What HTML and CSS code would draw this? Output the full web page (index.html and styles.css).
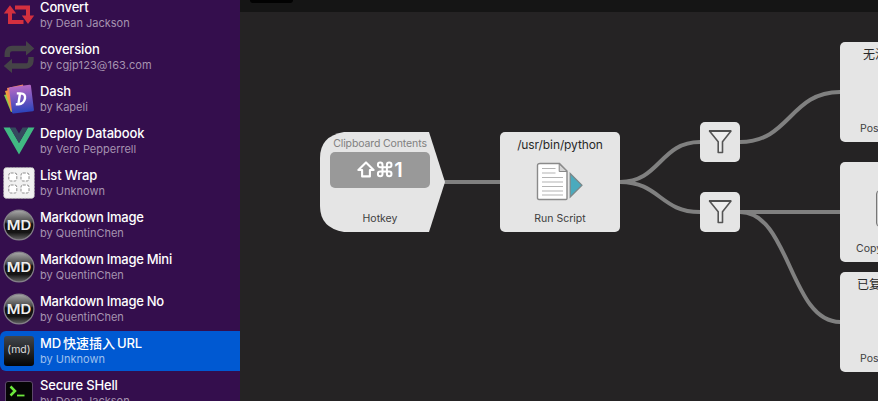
FILE: index.html
```html
<!DOCTYPE html>
<html lang="en">
<head>
<meta charset="utf-8">
<title>Workflows</title>
<link rel="stylesheet" href="styles.css">
</head>
<body>
<svg class="defs" width="0" height="0" aria-hidden="true">
  <defs>
    <linearGradient id="ball" x2="0" y2="1"><stop offset="0" stop-color="#aaa"/><stop offset=".4" stop-color="#484848"/><stop offset=".46" stop-color="#101010"/><stop offset=".75" stop-color="#151515"/><stop offset="1" stop-color="#666"/></linearGradient>
    <linearGradient id="dash" x2="0" y2="1"><stop offset="0" stop-color="#b568c4"/><stop offset="1" stop-color="#2c44bb"/></linearGradient>
    <symbol id="md" viewBox="0 0 32 32"><circle cx="16" cy="16" r="14.9" fill="url(#ball)" stroke="#858189" stroke-width="1.2"/><text x="16" y="21" text-anchor="middle" textLength="24.5" lengthAdjust="spacingAndGlyphs" class="md-text">MD</text></symbol>
    <symbol id="funnel" viewBox="0 0 40 40"><path d="M9.5 9H31L22.5 19.8V30.5H18.2V19.8Z" fill="#ededed" stroke="#555" stroke-width="1.6" stroke-linejoin="round"/><path d="M9 9H31" stroke="#4b4b4b" stroke-width="1.8"/></symbol>
  </defs>
</svg>
<div class="app">
  <aside class="sidebar">
    <div class="row"><svg class="icon" viewBox="0 0 32 32"><path d="M7 12V23H20.5M12 8.5H25V17" fill="none" stroke="#d3303f" stroke-width="4"/><path d="M.8 14.6 7 6.2 13.2 14.6ZM18.8 16.5H31.2L25 25Z" fill="#d3303f"/></svg><div><div class="title">Convert</div><div class="by">by Dean Jackson</div></div></div>
    <div class="row"><svg class="icon" viewBox="0 0 32 32"><path d="M4.2 16C4 9.5 5.5 7.5 9.5 7.5H25M28 16C28.3 23 26.5 25 22.5 25H8" fill="none" stroke="#454347" stroke-width="5.4"/><path d="M23 0 31.3 7.5 23 14.5ZM9 17.8 .8 25 9 32Z" fill="#454347"/></svg><div><div class="title">coversion</div><div class="by mail">by cgjp123@163.com</div></div></div>
    <div class="row"><svg class="icon" viewBox="0 0 32 32"><path d="M1 12 15 8 21 26 8 29Z" fill="#8ad04c"/><path d="M2 8 17 4 22 25 8 28Z" fill="#f09a3c"/><path d="M4 5 20 1.5 22 26 8 28Z" fill="#ee855c"/><rect x="7.5" y="3" width="22" height="26.5" rx="1.2" transform="rotate(-7 18 16)" fill="url(#dash)"/><path d="M13.8 10.4H17.5C21 10.4 22.6 12.5 22 15.6S18.8 21.2 15.8 21.2H12.8M17 10.4 15.4 21" fill="none" stroke="#fff" stroke-width="2.4"/></svg><div><div class="title">Dash</div><div class="by">by Kapeli</div></div></div>
    <div class="row"><svg class="icon" viewBox="0 0 32 32"><path d="M.5 2.5H7L16 18 25 2.5H31.5L16 29.5Z" fill="#41b883"/><path d="M7 2.5H12.5L16 8.5 19.5 2.5H25L16 18Z" fill="#35495e"/></svg><div><div class="title">Deploy Databook</div><div class="by">by Vero Pepperrell</div></div></div>
    <div class="row"><svg class="icon" viewBox="0 0 32 32"><rect x=".6" y=".6" width="30.8" height="30.8" rx="3" fill="#f1f1f1" stroke="#aaa" stroke-width=".8" stroke-dasharray="2 1.2"/><g fill="#fff" stroke="#8e8e8e" stroke-dasharray="2.8 1.2"><rect x="5.8" y="6" width="8" height="8" rx="2"/><rect x="18" y="6" width="8" height="8" rx="2"/><rect x="5.8" y="18" width="8" height="8" rx="2"/><rect x="18" y="18" width="8" height="8" rx="2"/></g></svg><div><div class="title">List Wrap</div><div class="by">by Unknown</div></div></div>
    <div class="row"><svg class="icon"><use href="#md"/></svg><div><div class="title tight">Markdown Image</div><div class="by">by QuentinChen</div></div></div>
    <div class="row"><svg class="icon"><use href="#md"/></svg><div><div class="title tight">Markdown Image Mini</div><div class="by">by QuentinChen</div></div></div>
    <div class="row"><svg class="icon"><use href="#md"/></svg><div><div class="title tight">Markdown Image No</div><div class="by">by QuentinChen</div></div></div>
    <div class="row selected"><div class="icon"><div class="md-tile">(md)</div></div><div><div class="title">MD<span class="cjk">快速插入</span>URL</div><div class="by">by Unknown</div></div></div>
    <div class="row"><svg class="icon" viewBox="0 0 32 32"><rect x="2.5" y="4.5" width="27" height="27" rx="2.5" fill="#050505" stroke="#5d486b"/><path d="M7.5 9.5 12 14 7.5 18.5" fill="none" stroke="#6de83c" stroke-width="2.5"/><path d="M14 18.5H21.5" stroke="#6de83c" stroke-width="1.8"/></svg><div><div class="title">Secure SHell</div><div class="by">by Dean Jackson</div></div></div>
  </aside>
  <main class="main">
    <div class="topbar"><div class="tab"></div></div>
    <div class="canvas">
      <svg class="wires" viewBox="240 12 638 389"><path d="M444 182H500M620 182C660 182 660 142 700 142M620 182C660 182 660 212 700 212M740 142C790 142 790 92 840 92M740 212H840M740 212C790 212 790 322 840 322"/></svg>
      <section class="node hotkey">
        <svg class="shape" viewBox="0 0 125 100"><path d="M24 0H109L125 50 109 100H24Q0 96 0 74V26Q0 4 24 0Z" fill="#e5e5e5"/></svg>
        <div class="hint">Clipboard Contents</div>
        <div class="keys"><svg viewBox="0 0 37 20"><g fill="none" stroke="#fff" stroke-width="2.1" stroke-linejoin="round"><path d="M9 2.4 1.4 10H5.1V16.4H12.9V10H16.6Z"/><path d="M25.5 6.9V4.9A2.3 2.3 0 1 0 23.2 7.2H32.2A2.3 2.3 0 1 0 29.9 4.9V13.9A2.3 2.3 0 1 0 32.2 11.6H23.2A2.3 2.3 0 1 0 25.5 13.9Z" stroke-width="2"/></g></svg><span>1</span></div>
        <div class="kind">Hotkey</div>
      </section>
      <section class="node script">
        <div class="head">/usr/bin/python</div>
        <svg class="doc" viewBox="0 0 48 40"><path d="M4 1.5H23.5L31 9V36.5Q31 37.5 30 37.5H3Q1.5 37.5 1.5 36V3.5Q1.5 1.5 4 1.5Z" fill="#fff" stroke="#8a8a8a" stroke-width="1.4"/><path d="M23.2 2V9.5H31Z" fill="#d5d5d5" stroke="#888"/><path d="M6 6.5H19.5M6 11H19.5M6 15.5H27M6 20H27M6 24.5H27M6 29H27M6 33H27" stroke="#b4b4b4" stroke-width="1.2"/><path d="M34.2 11.5V35L46 23.2Z" fill="#4baabd" stroke="#7b8789" stroke-width="1.2"/></svg>
        <div class="kind">Run Script</div>
      </section>
      <section class="node filter upper"><svg><use href="#funnel"/></svg></section>
      <section class="node filter lower"><svg><use href="#funnel"/></svg></section>
      <section class="node out one"><div class="head">无法</div><div class="kind">Post Notification</div></section>
      <section class="node out two"><div class="clip"></div><div class="kind">Copy to Clipboard</div></section>
      <section class="node out three"><div class="head">已复制</div><div class="kind">Post Notification</div></section>
    </div>
  </main>
</div>
</body>
</html>
```
FILE: styles.css
```css
* { box-sizing: border-box; }
body { margin: 0; font-family: Inter, "Noto Sans CJK SC", sans-serif; overflow: hidden; }
.defs { position: absolute; }
.app { display: flex; width: 878px; height: 401px; overflow: hidden; background: #252324; }
.sidebar { display: flex; flex-direction: column; gap: 2px; width: 240px; flex: none; margin-top: -5px; background: #340e4d; }
.row { display: flex; flex: none; height: 40px; padding: 4px 0 0 3px; gap: 5px; white-space: nowrap; }
.row.selected { background: #0059d2; border-radius: 6px 0 0 6px; }
.icon { width: 32px; height: 32px; flex: none; }
.title { height: 16px; line-height: 16px; font-size: 13px; font-weight: 500; letter-spacing: -.15px; color: #fff; }
.title.tight { letter-spacing: -.27px; }
.by { height: 16px; line-height: 16px; font-size: 11px; color: #a693b0; }
.by.mail { letter-spacing: .1px; }
.selected .by { color: #9dc0ee; }
.cjk { margin: 0 2px; letter-spacing: 0; }
.md-text { font: 600 13.5px Inter, sans-serif; fill: #eee; }
.md-tile { width: 30px; height: 30px; margin: 1px; border-radius: 3px; background: linear-gradient(#42464c, #050505); color: #ddd; font-size: 10.5px; line-height: 28px; text-align: center; }
.main { flex: 1; display: flex; flex-direction: column; min-width: 0; }
.topbar { height: 12px; flex: none; background: #151515; padding-left: 10px; }
.tab { width: 43px; height: 3px; background: #020202; border-radius: 0 0 4px 4px; }
.canvas { position: relative; flex: 1; overflow: hidden; }
.wires { position: absolute; left: 0; top: 0; width: 638px; height: 389px; fill: none; stroke: #808080; stroke-width: 4; }
.node { position: absolute; display: flex; flex-direction: column; align-items: center; width: 120px; height: 100px; background: #e5e5e5; border-radius: 5px; white-space: nowrap; color: #282828; }
.kind { margin-top: auto; margin-bottom: 5px; font-size: 10.5px; line-height: 16px; color: #404040; }
.head { margin-top: 5px; font-size: 12px; line-height: 16px; letter-spacing: -.1px; }
.hotkey { left: 80px; top: 120px; background: none; }
.shape { position: absolute; width: 125px; height: 100px; left: 0; top: 0; }
.hint { position: relative; margin-top: 4px; height: 16px; font-size: 10.5px; line-height: 16px; letter-spacing: -.12px; color: #808080; }
.keys { position: relative; display: flex; align-items: center; justify-content: center; width: 100px; height: 36px; border-radius: 5px; background: #999; color: #fff; font-size: 20px; font-weight: 600; }
.keys svg { width: 37px; height: 20px; flex: none; }
.hotkey .kind { position: relative; }
.script { left: 260px; top: 120px; }
.doc { width: 48px; height: 40px; margin: 9px 0 0; }
.filter { left: 460px; width: 40px; height: 40px; }
.filter svg { width: 40px; height: 40px; }
.upper { top: 110px; }
.lower { top: 180px; }
.out { left: 600px; align-items: flex-start; }
.out .kind { margin-left: 20px; }
.one { top: 30px; }
.two { top: 150px; }
.two .kind { margin-left: 16px; }
.three { top: 260px; }
.one .head { margin-left: 23px; }
.three .head { margin-left: 17px; }
.clip { width: 48px; height: 37px; margin: 28px 0 0 36px; border: 1px solid #777; border-radius: 4px; background: #ccc; }
```
